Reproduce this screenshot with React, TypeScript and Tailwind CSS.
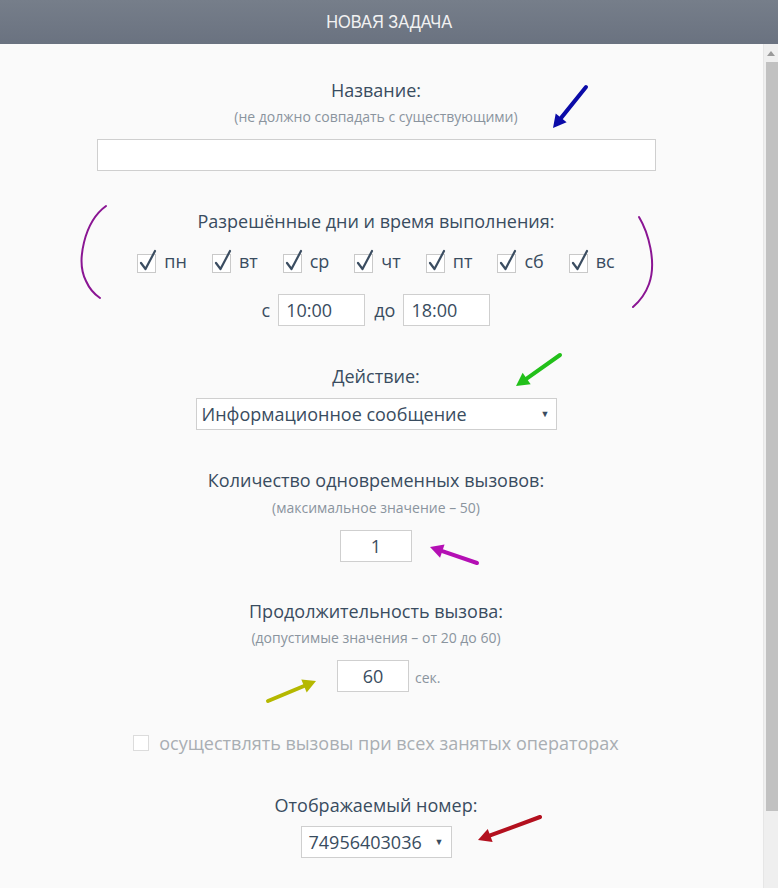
import React from "react";

const days = ["пн", "вт", "ср", "чт", "пт", "сб", "вс"];

function CheckedBox() {
  return (
    <svg width="22" height="24" viewBox="0 0 22 24" className="shrink-0">
      <rect x="0.5" y="5.5" width="18" height="18" fill="#fff" stroke="#c9c9c9" />
      <path d="M4 14 L8.5 20 L18 2" fill="none" stroke="#3b4d61" strokeWidth="2.2" strokeLinecap="round" strokeLinejoin="round" />
    </svg>
  );
}

function Arrow({ x1, y1, x2, y2, color }: { x1: number; y1: number; x2: number; y2: number; color: string }) {
  // arrow from (x1,y1) to head at (x2,y2)
  const ang = Math.atan2(y2 - y1, x2 - x1);
  const len = 13;
  const w = 7;
  const bx = x2 - Math.cos(ang) * len;
  const by = y2 - Math.sin(ang) * len;
  const px = -Math.sin(ang) * w;
  const py = Math.cos(ang) * w;
  return (
    <g>
      <line x1={x1} y1={y1} x2={bx} y2={by} stroke={color} strokeWidth="4" strokeLinecap="round" />
      <polygon points={`${x2},${y2} ${bx + px},${by + py} ${bx - px},${by - py}`} fill={color} />
    </g>
  );
}

export default function App() {
  const label = "text-[18px] leading-6 text-[#394c60]";
  const hint = "text-[14px] leading-5 text-[#8a949e]";
  const box = "bg-white border border-[#cfcfcf] text-[18px] text-[#394c60]";
  return (
    <div className="relative w-[778px] h-[888px] overflow-hidden bg-[#fafafa]" style={{ fontFamily: "'Open Sans', 'Noto Sans', sans-serif" }}>
      {/* header */}
      <div className="h-[44px] bg-gradient-to-b from-[#767e8a] to-[#6a7280] flex items-center justify-center">
        <span className="text-[19px] text-[#f2f2f2] scale-x-[0.86]" style={{ fontFamily: "'Liberation Sans', sans-serif" }}>
          НОВАЯ ЗАДАЧА
        </span>
      </div>

      <div className="flex">
        {/* form */}
        <div className="w-[763px] pr-[11px] flex flex-col items-center">
          <div className={`${label} mt-[34px]`}>Название:</div>
          <div className={`${hint} mt-[5px]`}>(не должно совпадать с существующими)</div>
          <div className="mt-[12px] w-[559px] h-[32px] bg-white border border-[#cfcfcf]" />

          <div className={`${label} mt-[38px]`}>Разрешённые дни и время выполнения:</div>
          <div className="mt-[16px] flex items-end gap-[25px] h-6">
            {days.map((d) => (
              <div key={d} className="flex items-end gap-[5px]">
                <CheckedBox />
                <span className={`${label} leading-5`}>{d}</span>
              </div>
            ))}
          </div>
          <div className="mt-[21px] flex items-center">
            <span className={`${label} mr-[8px]`}>с</span>
            <div className={`${box} w-[87px] h-[32px] flex items-center pl-[7px]`}>10:00</div>
            <span className={`${label} ml-[9px] mr-[8px]`}>до</span>
            <div className={`${box} w-[87px] h-[32px] flex items-center pl-[7px]`}>18:00</div>
          </div>

          <div className={`${label} mt-[38px]`}>Действие:</div>
          <div className={`${box} mt-[10px] w-[361px] h-[32px] flex items-center justify-between pl-[5px] pr-[6px]`}>
            <span>Информационное сообщение</span>
            <span className="text-[9px]">▼</span>
          </div>

          <div className={`${label} mt-[38px]`}>Количество одновременных вызовов:</div>
          <div className={`${hint} mt-[6px]`}>(максимальное значение – 50)</div>
          <div className={`${box} mt-[12px] w-[72px] h-[32px] flex items-center justify-center`}>1</div>

          <div className={`${label} mt-[37px]`}>Продолжительность вызова:</div>
          <div className={`${hint} mt-[5px]`}>(допустимые значения – от 20 до 60)</div>
          <div className="mt-[12px] flex items-center">
            <div className={`${box} w-[72px] h-[32px] flex items-center justify-center`}>60</div>
            <span className={`${hint} ml-[6px] mt-[4px] w-0 whitespace-nowrap`}>сек.</span>
          </div>

          <div className="mt-[39px] flex items-center gap-[10px] h-6">
            <div className="w-[16px] h-[16px] bg-white border border-[#dcdcdc]" />
            <span className="text-[18px] text-[#a9aeb3]">осуществлять вызовы при всех занятых операторах</span>
          </div>

          <div className={`${label} mt-[38px]`}>Отображаемый номер:</div>
          <div className={`${box} mt-[9px] w-[151px] h-[32px] flex items-center justify-between pl-[7px] pr-[7px]`}>
            <span>74956403036</span>
            <span className="text-[9px]">▼</span>
          </div>
        </div>

        {/* scrollbar */}
        <div className="w-[15px] h-[844px] bg-[#efefef] border-l border-[#e6e6e6] flex flex-col items-center">
          <div className="h-[18px] flex items-center justify-center">
            <svg width="8" height="5" viewBox="0 0 8 5"><polygon points="4,0 8,5 0,5" fill="#9a9a9a" /></svg>
          </div>
          <div className="ml-[2px] self-stretch h-[749px] bg-[#c1c1c1]" />
        </div>
      </div>

      {/* annotations drawn over the form */}
      <svg className="absolute left-0 top-0 pointer-events-none" width="778" height="888">
        <Arrow x1={586} y1={87} x2={553} y2={128} color="#0b0ba8" />
        <Arrow x1={560} y1={355} x2={516} y2={386} color="#22c01a" />
        <Arrow x1={477} y1={563} x2={430} y2={547} color="#b40fb4" />
        <Arrow x1={268} y1={701} x2={316} y2={681} color="#b5b800" />
        <Arrow x1={540} y1={817} x2={478} y2={840} color="#b3101e" />
        <path d="M106 206 C 84 222, 76 262, 86 281 C 90 290, 94 294, 100 298" fill="none" stroke="#8a1593" strokeWidth="2" strokeLinecap="round" />
        <path d="M639 217 C 648 232, 657 262, 649 284 C 645 295, 640 301, 633 307" fill="none" stroke="#8a1593" strokeWidth="2" strokeLinecap="round" />
      </svg>
    </div>
  );
}
